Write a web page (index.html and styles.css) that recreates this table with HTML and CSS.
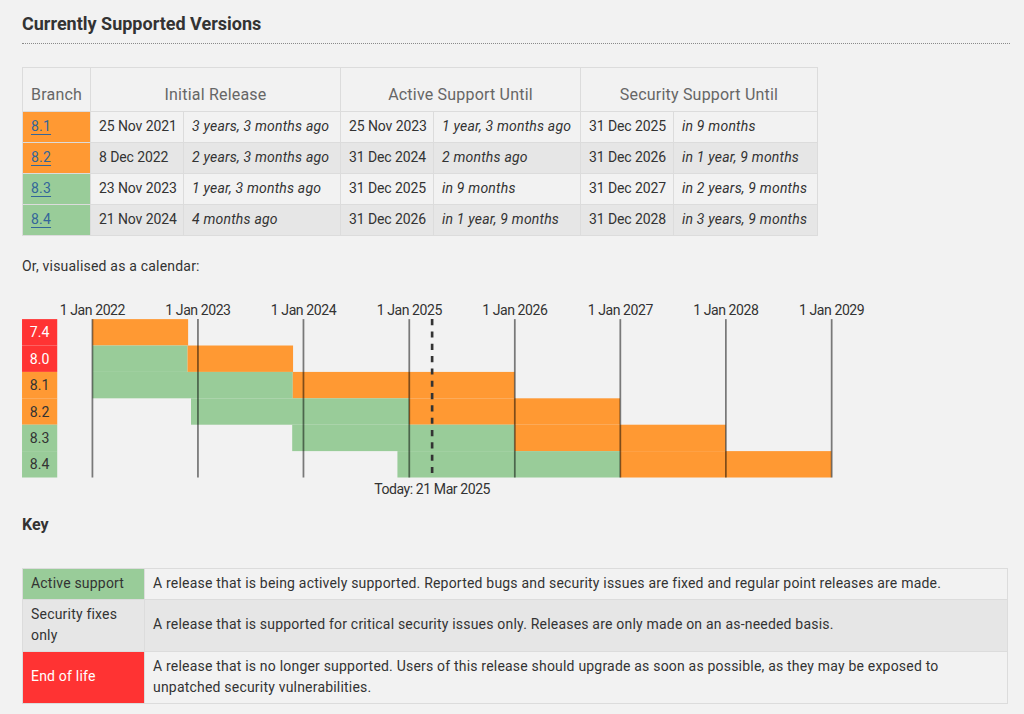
FILE: index.html
```html
<!DOCTYPE html>
<html lang="en">
<head>
<meta charset="utf-8">
<title>Supported Versions</title>
<link rel="stylesheet" href="styles.css">
</head>
<body>
<main class="content">
  <h2 class="section-title">Currently Supported Versions</h2>

  <table class="versions">
    <colgroup>
      <col class="c-branch">
      <col class="c-date">
      <col class="c-rel1">
      <col class="c-date">
      <col class="c-rel2">
      <col class="c-date">
      <col class="c-rel3">
    </colgroup>
    <thead>
      <tr>
        <th>Branch</th>
        <th colspan="2">Initial Release</th>
        <th colspan="2">Active Support Until</th>
        <th colspan="2">Security Support Until</th>
      </tr>
    </thead>
    <tbody>
      <tr>
        <td class="branch security"><a href="#v81">8.1</a></td>
        <td class="date">25 Nov 2021</td><td class="rel">3 years, 3 months ago</td>
        <td class="date">25 Nov 2023</td><td class="rel">1 year, 3 months ago</td>
        <td class="date">31 Dec 2025</td><td class="rel">in 9 months</td>
      </tr>
      <tr>
        <td class="branch security"><a href="#v82">8.2</a></td>
        <td class="date">8 Dec 2022</td><td class="rel">2 years, 3 months ago</td>
        <td class="date">31 Dec 2024</td><td class="rel">2 months ago</td>
        <td class="date">31 Dec 2026</td><td class="rel">in 1 year, 9 months</td>
      </tr>
      <tr>
        <td class="branch stable"><a href="#v83">8.3</a></td>
        <td class="date">23 Nov 2023</td><td class="rel">1 year, 3 months ago</td>
        <td class="date">31 Dec 2025</td><td class="rel">in 9 months</td>
        <td class="date">31 Dec 2027</td><td class="rel">in 2 years, 9 months</td>
      </tr>
      <tr>
        <td class="branch stable"><a href="#v84">8.4</a></td>
        <td class="date">21 Nov 2024</td><td class="rel">4 months ago</td>
        <td class="date">31 Dec 2026</td><td class="rel">in 1 year, 9 months</td>
        <td class="date">31 Dec 2028</td><td class="rel">in 3 years, 9 months</td>
      </tr>
    </tbody>
  </table>

  <p class="intro">Or, visualised as a calendar:</p>

  <svg class="calendar" viewBox="0 0 970 228" width="853.6" height="200.64" xmlns="http://www.w3.org/2000/svg">
    <g class="branches">
      <rect class="eol" x="0" y="24" width="40" height="30"/>
      <text class="label-light" x="20" y="39">7.4</text>
      <rect class="eol" x="0" y="54" width="40" height="30"/>
      <text class="label-light" x="20" y="69">8.0</text>
      <rect class="security" x="0" y="84" width="40" height="30"/>
      <text x="20" y="99">8.1</text>
      <rect class="security" x="0" y="114" width="40" height="30"/>
      <text x="20" y="129">8.2</text>
      <rect class="stable" x="0" y="144" width="40" height="30"/>
      <text x="20" y="159">8.3</text>
      <rect class="stable" x="0" y="174" width="40" height="30"/>
      <text x="20" y="189">8.4</text>
    </g>
    <g class="bounds">
      <rect class="security" x="80" y="24" width="108.75" height="30"/>
      <rect class="stable" x="80" y="54" width="108.09" height="30"/>
      <rect class="security" x="188.09" y="54" width="119.92" height="30"/>
      <rect class="stable" x="80" y="84" width="227.69" height="30"/>
      <rect class="security" x="307.69" y="84" width="251.99" height="30"/>
      <rect class="stable" x="192.04" y="114" width="247.72" height="30"/>
      <rect class="security" x="439.76" y="114" width="239.85" height="30"/>
      <rect class="stable" x="307.03" y="144" width="252.65" height="30"/>
      <rect class="security" x="559.68" y="144" width="239.85" height="30"/>
      <rect class="stable" x="426.62" y="174" width="252.99" height="30"/>
      <rect class="security" x="679.61" y="174" width="240.17" height="30"/>
    </g>
    <g class="years">
      <line x1="80" y1="24" x2="80" y2="204"/>
      <text x="80" y="19.2">1 Jan 2022</text>
      <line x1="199.92" y1="24" x2="199.92" y2="204"/>
      <text x="199.92" y="19.2">1 Jan 2023</text>
      <line x1="319.84" y1="24" x2="319.84" y2="204"/>
      <text x="319.84" y="19.2">1 Jan 2024</text>
      <line x1="440.09" y1="24" x2="440.09" y2="204"/>
      <text x="440.09" y="19.2">1 Jan 2025</text>
      <line x1="560.01" y1="24" x2="560.01" y2="204"/>
      <text x="560.01" y="19.2">1 Jan 2026</text>
      <line x1="679.93" y1="24" x2="679.93" y2="204"/>
      <text x="679.93" y="19.2">1 Jan 2027</text>
      <line x1="799.86" y1="24" x2="799.86" y2="204"/>
      <text x="799.86" y="19.2">1 Jan 2028</text>
      <line x1="920.11" y1="24" x2="920.11" y2="204"/>
      <text x="920.11" y="19.2">1 Jan 2029</text>
    </g>
    <g class="today">
      <line x1="466.05" y1="24" x2="466.05" y2="204"/>
      <text x="466.05" y="223.2">Today: 21 Mar 2025</text>
    </g>
  </svg>

  <h3 class="key-title">Key</h3>

  <table class="key">
    <colgroup>
      <col class="k-label">
      <col>
    </colgroup>
    <tbody>
      <tr>
        <td class="stable">Active support</td>
        <td>A release that is being actively supported. Reported bugs and security issues are fixed and regular point releases are made.</td>
      </tr>
      <tr>
        <td class="security">Security fixes only</td>
        <td>A release that is supported for critical security issues only. Releases are only made on an as-needed basis.</td>
      </tr>
      <tr>
        <td class="eol">End of life</td>
        <td>A release that is no longer supported. Users of this release should upgrade as soon as possible, as they may be exposed to unpatched security vulnerabilities.</td>
      </tr>
    </tbody>
  </table>
</main>
</body>
</html>
```

FILE: styles.css
```css
* {
  box-sizing: border-box;
}

html,
body {
  background: #f2f2f2;
}

body {
  margin: 0;
  color: #333;
  font-family: "Roboto", "Liberation Sans", sans-serif;
  font-size: 14px;
  line-height: 21px;
  letter-spacing: 0.2px;
}

.content {
  margin: 0 14px 0 22px;
}

.section-title {
  margin: 0;
  padding: 12px 0 7px;
  font-size: 18px;
  line-height: 24px;
  font-weight: 700;
  letter-spacing: 0;
  border-bottom: 1px dotted #8a8a8a;
}

/* Versions table */
.versions {
  margin-top: 23px;
  border-collapse: collapse;
  table-layout: fixed;
  width: 795px;
}

.c-branch { width: 68px; }
.c-date { width: 93px; }
.c-rel1 { width: 157px; }
.c-rel2 { width: 147px; }
.c-rel3 { width: 144px; }

.versions th,
.versions td {
  border: 1px solid #dcdcdc;
}

.versions th {
  padding: 15px 8px 4px;
  font-size: 16px;
  line-height: 24px;
  font-weight: 400;
  color: #666;
  text-align: center;
  background: #f2f2f2;
}

.versions td {
  padding: 4px 8px 5px;
  white-space: nowrap;
  background: #f2f2f2;
}

.versions tbody tr:nth-child(even) td {
  background: #e6e6e6;
}

.versions td.date {
  letter-spacing: -0.1px;
}

.versions td.rel {
  font-style: italic;
}

.versions td.branch.security {
  background: #f93;
}

.versions td.branch.stable {
  background: #9c9;
}

.branch a {
  color: #369;
  text-decoration: underline;
  text-decoration-thickness: 1px;
  text-underline-offset: 3px;
}

.intro {
  margin: 20px 0 21px;
}

/* Calendar */
.calendar {
  display: block;
  font-family: "Roboto", "Liberation Sans", sans-serif;
}

.calendar text {
  font-size: 16px;
  letter-spacing: -0.5px;
  fill: #333;
  text-anchor: middle;
}

.calendar .branches text {
  dominant-baseline: central;
  letter-spacing: 0;
}

.calendar .branches text.label-light {
  fill: #fff;
}

.calendar .eol { fill: #f33; }
.calendar .security { fill: #f93; }
.calendar .stable { fill: #9c9; }

.calendar .years line {
  stroke: #000;
  stroke-opacity: 0.5;
  stroke-width: 2;
}

.calendar .today line {
  stroke: #333;
  stroke-width: 3;
  stroke-dasharray: 7 7;
}

/* Key */
.key-title {
  margin: 14px 0 31px;
  font-size: 16px;
  line-height: 24px;
  font-weight: 700;
  letter-spacing: 0;
}

.key {
  width: calc(100% - 2px);
  border-collapse: collapse;
  table-layout: fixed;
}

.k-label { width: 122px; }

.key td {
  border: 1px solid #dcdcdc;
  padding: 4px 8px 5px;
  background: #f2f2f2;
  vertical-align: middle;
}

.key tr:nth-child(even) td {
  background: #e6e6e6;
}

.key td.stable { background: #9c9; }
.key td.security { background: #f93; }
.key td.eol { background: #f33; color: #fff; }
```
